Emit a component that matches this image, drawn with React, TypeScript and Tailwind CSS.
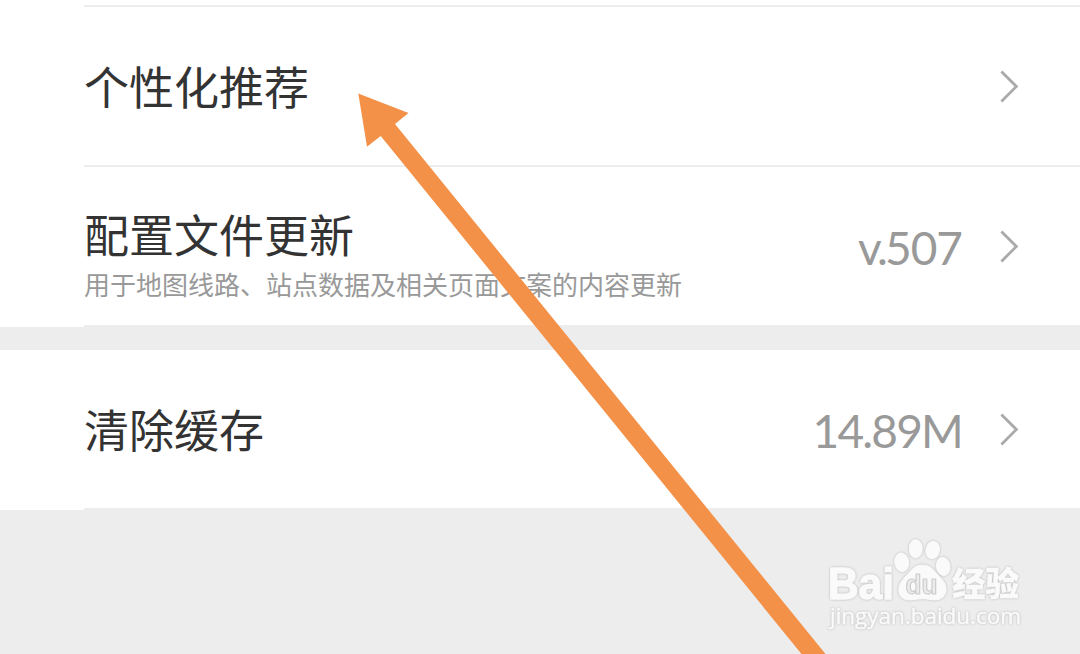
import type { ReactNode } from "react";

interface SettingRowProps {
  title: string;
  description?: string;
  value?: ReactNode;
}

function Chevron() {
  return (
    <svg className="w-5 h-9 shrink-0" viewBox="0 0 20 36" fill="none">
      <path d="M2.4 3.4L17.4 18.4L2.4 33.4" stroke="#aaaaaa" strokeWidth="2.8" />
    </svg>
  );
}

function SettingRow({ title, description, value }: SettingRowProps) {
  return (
    <div className="h-40 bg-white pl-[84px]">
      <div className="h-full border-b-2 border-[#ededed] pr-[61px] flex items-center justify-between">
        <div className={description ? "flex flex-col pt-4" : "flex flex-col"}>
          <span className="text-[45px] leading-[58px] text-[#333333] whitespace-nowrap">{title}</span>
          {description && (
            <span className="mt-0.5 text-[26px] leading-[38px] text-[#999999] whitespace-nowrap">{description}</span>
          )}
        </div>
        <div className="flex items-center gap-[37px]">
          {value}
          <Chevron />
        </div>
      </div>
    </div>
  );
}

function Watermark() {
  return (
    <svg
      className="absolute left-[820px] top-[530px] w-[210px] h-[110px] drop-shadow-[0_0_1px_#b4b4b4]"
      viewBox="820 530 210 110"
      fill="#fafafa"
      stroke="#fafafa"
      strokeLinejoin="round"
    >
      <text x="828" y="598.5" fontFamily="Liberation Sans" fontWeight="700" fontSize="44" strokeWidth="1.4" textLength="66" lengthAdjust="spacingAndGlyphs">
        Bai
      </text>
      <ellipse cx="901.7" cy="562.3" rx="7" ry="9.3" transform="rotate(-8 901.7 562.3)" />
      <ellipse cx="915.7" cy="548.7" rx="6.6" ry="9.2" />
      <ellipse cx="932.7" cy="550" rx="6.8" ry="8.8" transform="rotate(12 932.7 550)" />
      <ellipse cx="943.2" cy="566.5" rx="6.8" ry="9" transform="rotate(-8 943.2 566.5)" />
      <path d="M922 565C914 565 911 571 906 576C901 581 898 586 899 592C900 599 907 601 914 599.5C920 598.5 925 598.5 931 599.5C939 601 945 598 946 591C947 584 943 580 938 575C933 569 930 565 922 565Z" />
      <text x="905.5" y="594" fontFamily="Liberation Sans" fontWeight="700" fontSize="27" textLength="32" lengthAdjust="spacingAndGlyphs" fill="#ececec" stroke="#cdcdcd" strokeWidth="1.2">
        du
      </text>
      <text x="952" y="596" fontFamily="Noto Sans CJK SC" fontWeight="900" fontSize="33" strokeWidth="0.4" textLength="67" lengthAdjust="spacingAndGlyphs">
        经验
      </text>
      <text x="830" y="624" fontFamily="Open Sans" fontSize="22" strokeWidth="0.5" textLength="191" lengthAdjust="spacingAndGlyphs">
        jingyan.baidu.com
      </text>
    </svg>
  );
}

export default function App() {
  return (
    <div className="relative w-[1080px] h-[654px] overflow-hidden bg-[#ededed] font-['Noto_Sans_CJK_SC',sans-serif]">
      <div className="h-[7px] bg-white pl-[84px]">
        <div className="h-full border-b-2 border-[#ededed]" />
      </div>
      <SettingRow title="个性化推荐" />
      <SettingRow
        title="配置文件更新"
        description="用于地图线路、站点数据及相关页面文案的内容更新"
        value={
          <span className="pt-1 font-[Lato,sans-serif] text-[46px] leading-[58px] tracking-[-1px] text-[#999999]">
            <span className="tracking-[-3px]">v.</span>507
          </span>
        }
      />
      <div className="h-[23px]" />
      <SettingRow
        title="清除缓存"
        value={
          <span className="pt-1 font-[Lato,sans-serif] text-[46px] leading-[58px] tracking-[-1.8px] text-[#999999]">14.89M</span>
        }
      />

      <Watermark />

      {/* pointer arrow */}
      <svg className="absolute left-0 top-0 w-[1080px] h-[654px] pointer-events-none" viewBox="0 0 1080 654">
        <path d="M358.3 93.5L408.5 113L395 124L825.5 654H801.5L380.7 136L367 146.7Z" fill="#f39149" />
      </svg>
    </div>
  );
}
